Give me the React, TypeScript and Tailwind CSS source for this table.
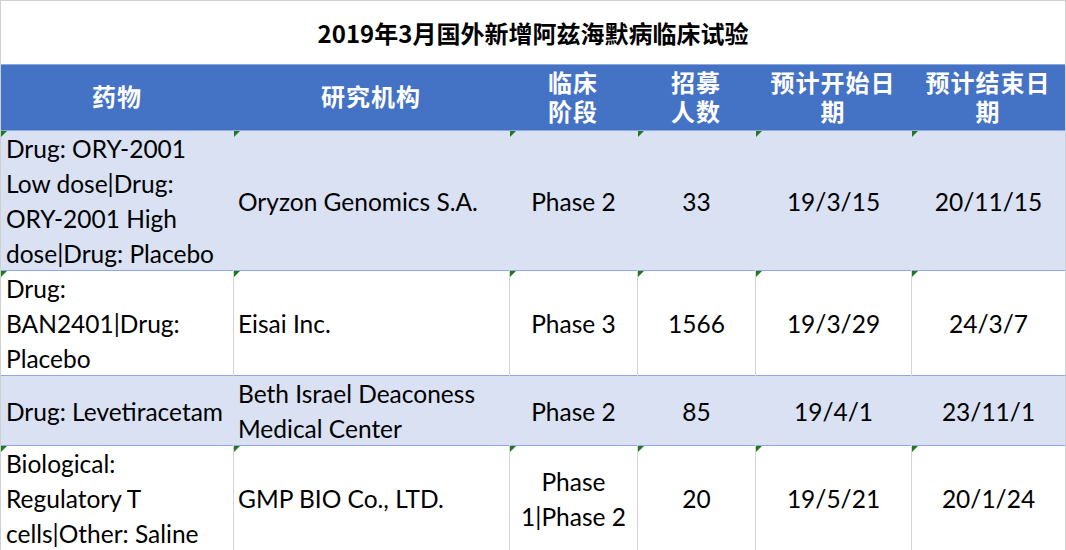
const latin = "font-['Lato','Noto_Sans_CJK_SC',sans-serif]";
const cjk = "font-['Noto_Sans_CJK_SC',sans-serif]";

type Row = {
  drug: string[];
  org: string[];
  phase: string[];
  count: string;
  start: string;
  end: string;
  height: string;
  shaded: boolean;
  flags: boolean;
};

const rows: Row[] = [
  {
    drug: ["Drug: ORY-2001", "Low dose|Drug:", "ORY-2001 High", "dose|Drug: Placebo"],
    org: ["Oryzon Genomics S.A."],
    phase: ["Phase 2"],
    count: "33",
    start: "19/3/15",
    end: "20/11/15",
    height: "h-[140px]",
    shaded: true,
    flags: true,
  },
  {
    drug: ["Drug:", "BAN2401|Drug:", "Placebo"],
    org: ["Eisai Inc."],
    phase: ["Phase 3"],
    count: "1566",
    start: "19/3/29",
    end: "24/3/7",
    height: "h-[105px]",
    shaded: false,
    flags: true,
  },
  {
    drug: ["Drug: Levetiracetam"],
    org: ["Beth Israel Deaconess", "Medical Center"],
    phase: ["Phase 2"],
    count: "85",
    start: "19/4/1",
    end: "23/11/1",
    height: "h-[70px]",
    shaded: true,
    flags: false,
  },
  {
    drug: ["Biological:", "Regulatory T", "cells|Other: Saline"],
    org: ["GMP BIO Co., LTD."],
    phase: ["Phase", "1|Phase 2"],
    count: "20",
    start: "19/5/21",
    end: "20/1/24",
    height: "h-[105px]",
    shaded: false,
    flags: true,
  },
];

const headers = [
  ["药物"],
  ["研究机构"],
  ["临床", "阶段"],
  ["招募", "人数"],
  ["预计开始日", "期"],
  ["预计结束日", "期"],
];

const cols = "grid grid-cols-[232px_276px_128px_118px_156px_154px]";

function Flag() {
  return (
    <span className="absolute left-0 top-0 w-0 h-0 border-t-[6px] border-r-[6px] border-t-[#1f7a1f] border-r-transparent" />
  );
}

function Cell({
  lines,
  center,
  shaded,
  flag,
  first,
}: {
  lines: string[];
  center?: boolean;
  shaded: boolean;
  flag: boolean;
  first?: boolean;
}) {
  return (
    <div
      className={`relative flex flex-col justify-center ${
        center ? "items-center text-center" : first ? "items-start pl-[5px]" : "items-start pl-[4px]"
      } ${first ? "border-l-0" : "border-l"} ${
        shaded ? "border-l-[#d9e1f2]" : "border-l-[#d4d4d4]"
      }`}
    >
      {flag && <Flag />}
      {lines.map((l, i) => (
        <div key={i} className="leading-[35px] whitespace-nowrap">
          {l}
        </div>
      ))}
    </div>
  );
}

export default function App() {
  return (
    <div className="w-[1066px] h-[550px] bg-white overflow-hidden">
      <div className="w-[1066px] border-t border-l border-r border-[#d0d0d0]">
        <div
          className={`h-[63px] flex items-center justify-center text-[24px] font-bold text-black ${cjk}`}
        >
          2019年3月国外新增阿兹海默病临床试验
        </div>
        <div
          className={`${cols} h-[66px] bg-[#4472c4] border-t border-[#8ea9db] text-white text-[24px] font-bold ${cjk}`}
        >
          {headers.map((h, i) => (
            <div key={i} className="flex flex-col items-center justify-center pb-[4px]">
              {h.map((l, j) => (
                <div key={j} className="leading-[29px] tracking-[1px]">
                  {l}
                </div>
              ))}
            </div>
          ))}
        </div>
        {rows.map((r, i) => (
          <div
            key={i}
            className={`${cols} ${r.height} border-t border-[#8ea9db] ${
              r.shaded ? "bg-[#d9e1f2]" : "bg-white"
            } text-[24.5px] text-black ${latin}`}
          >
            <Cell lines={r.drug} shaded={r.shaded} flag={r.flags} first />
            <Cell lines={r.org} shaded={r.shaded} flag={r.flags} />
            <Cell lines={r.phase} shaded={r.shaded} flag={r.flags} center />
            <Cell lines={[r.count]} shaded={r.shaded} flag={r.flags} center />
            <Cell lines={[r.start]} shaded={r.shaded} flag={r.flags} center />
            <Cell lines={[r.end]} shaded={r.shaded} flag={r.flags} center />
          </div>
        ))}
      </div>
    </div>
  );
}
